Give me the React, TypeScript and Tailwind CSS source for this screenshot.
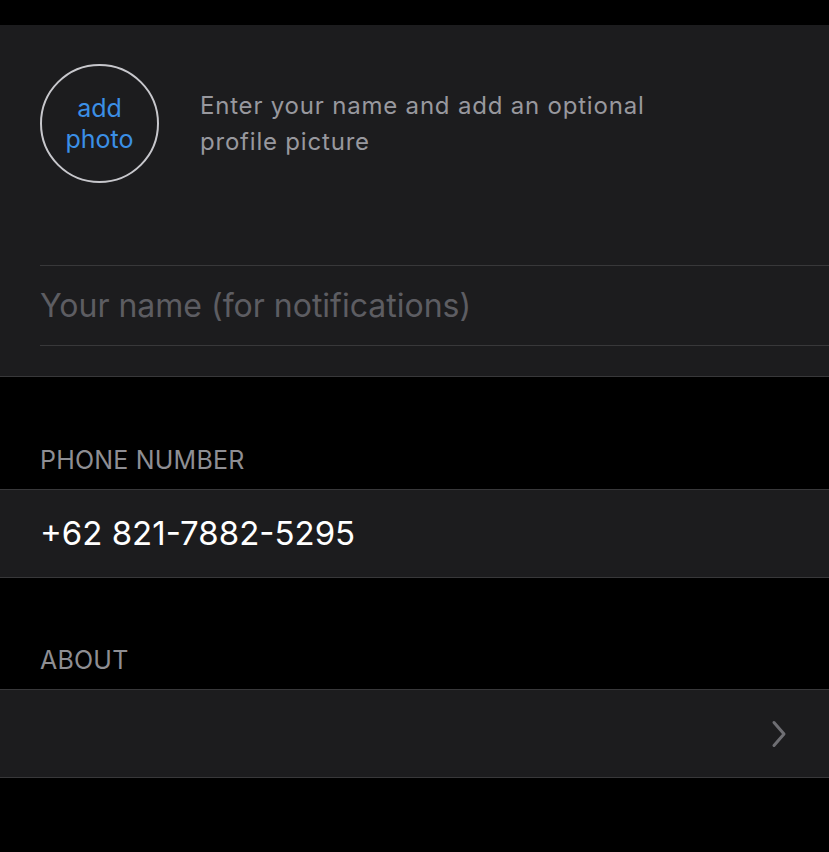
import React from "react";

export default function App() {
  return (
    <div
      className="w-[829px] h-[852px] bg-black overflow-hidden"
      style={{ fontFamily: "Inter, 'Noto Sans', sans-serif" }}
    >
      <div className="h-[25px]" />

      {/* Profile panel */}
      <div className="bg-[#1c1c1e] border-b border-[#38383a] h-[352px] flex flex-col">
        <div className="flex items-center pl-[40px] pt-[39px]">
          <div className="w-[119px] h-[119px] rounded-full border-2 border-[#c7c7cc] flex flex-col items-center justify-center text-[#3b8fe6] text-[25px] leading-[31px]">
            <span>add</span>
            <span>photo</span>
          </div>
          <p className="ml-[41px] text-[#98989e] text-[24px] tracking-[0.8px] leading-[36px] w-[520px] -mt-[0px]">
            Enter your name and add an optional profile picture
          </p>
        </div>
        <div className="ml-[40px] mt-[82px] border-t border-[#38383a] border-b h-[81px] flex items-center">
          <span className="text-[#5d5d62] text-[32px]">
            Your name (for notifications)
          </span>
        </div>
      </div>

      {/* Phone number */}
      <div className="pl-[40px] pt-[68px] pb-[14px] text-[#8e8e93] text-[25px] tracking-[0.2px] leading-[30px]">
        PHONE NUMBER
      </div>
      <div className="bg-[#1c1c1e] border-y border-[#38383a] h-[89px] flex items-center pl-[40px]">
        <span className="text-white text-[33px]">+62 821-7882-5295</span>
      </div>

      {/* About */}
      <div className="pl-[40px] pt-[67px] pb-[14px] text-[#8e8e93] text-[25px] tracking-[0.2px] leading-[30px]">
        ABOUT
      </div>
      <div className="bg-[#1c1c1e] border-y border-[#38383a] h-[89px] flex items-center justify-end pr-[42px]">
        <svg width="16" height="28" viewBox="0 0 16 28" fill="none">
          <path
            d="M3 2.5 L13 14 L3 25.5"
            stroke="#6e6e73"
            strokeWidth="3"
            strokeLinecap="round"
            strokeLinejoin="round"
          />
        </svg>
      </div>
    </div>
  );
}
